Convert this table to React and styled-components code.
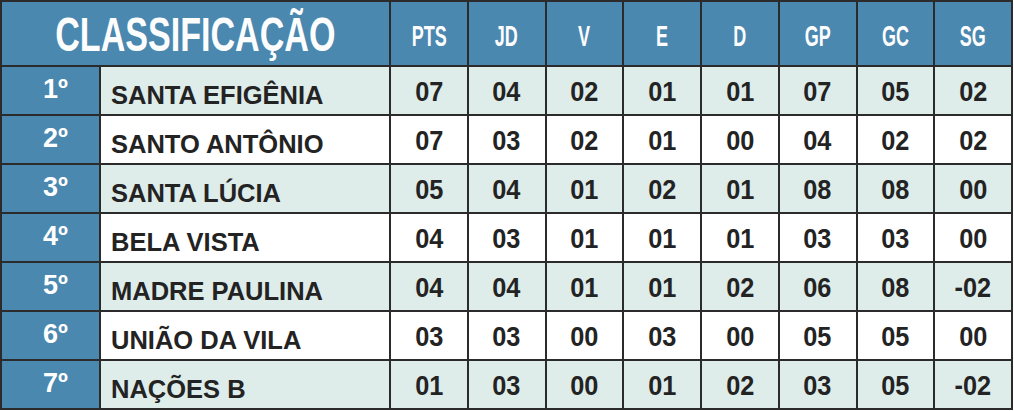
import React from 'react';
import styled, { createGlobalStyle } from 'styled-components';

const GlobalStyle = createGlobalStyle`
  html, body {
    margin: 0;
    padding: 0;
    background: #ffffff;
  }
  body {
    font-family: "Liberation Sans", Arial, sans-serif;
  }
`;

const standings = [
  { pos: '1º', team: 'SANTA EFIGÊNIA', stats: ['07', '04', '02', '01', '01', '07', '05', '02'] },
  { pos: '2º', team: 'SANTO ANTÔNIO', stats: ['07', '03', '02', '01', '00', '04', '02', '02'] },
  { pos: '3º', team: 'SANTA LÚCIA', stats: ['05', '04', '01', '02', '01', '08', '08', '00'] },
  { pos: '4º', team: 'BELA VISTA', stats: ['04', '03', '01', '01', '01', '03', '03', '00'] },
  { pos: '5º', team: 'MADRE PAULINA', stats: ['04', '04', '01', '01', '02', '06', '08', '-02'] },
  { pos: '6º', team: 'UNIÃO DA VILA', stats: ['03', '03', '00', '03', '00', '05', '05', '00'] },
  { pos: '7º', team: 'NAÇÕES B', stats: ['01', '03', '00', '01', '02', '03', '05', '-02'] },
];

const columns = ['PTS', 'JD', 'V', 'E', 'D', 'GP', 'GC', 'SG'];

const App = () => {
  return (
    <>
      <GlobalStyle />
      <Table>
        <TitleCell>
          <Condensed $scale={0.71}>CLASSIFICAÇÃO</Condensed>
        </TitleCell>
        {columns.map((col) => (
          <HeadCell key={col}>
            <Condensed $scale={0.6}>{col}</Condensed>
          </HeadCell>
        ))}
        {standings.map((row, i) => (
          <React.Fragment key={row.pos}>
            <PosCell>{row.pos}</PosCell>
            <NameCell $shaded={i % 2 === 0}>{row.team}</NameCell>
            {row.stats.map((val, j) => (
              <StatCell key={j} $shaded={i % 2 === 0}>
                <Condensed $scale={0.92}>{val}</Condensed>
              </StatCell>
            ))}
          </React.Fragment>
        ))}
      </Table>
    </>
  );
};

const Table = styled.div`
  display: grid;
  grid-template-columns: 97px 288px repeat(8, 1fr);
  grid-template-rows: 63px repeat(7, 47px);
  gap: 2px;
  width: 1013px;
  box-sizing: border-box;
  padding: 2px;
  background: #2b2b2b;
`;

const Condensed = styled.span`
  display: inline-block;
  transform: scaleX(${(p) => p.$scale});
  white-space: nowrap;
`;

const HeadCell = styled.div`
  display: flex;
  align-items: center;
  justify-content: center;
  background: #4a88b0;
  color: #fdfdfd;
  font-size: 30px;
  font-weight: 700;
  padding-top: 4px;
  box-sizing: border-box;
`;

const TitleCell = styled(HeadCell)`
  grid-column: span 2;
  font-size: 48px;
  padding-top: 2px;
`;

const PosCell = styled.div`
  display: flex;
  align-items: center;
  justify-content: center;
  background: #4a88b0;
  color: #ffffff;
  font-size: 27px;
  font-weight: 700;
  padding: 0 0 2px 10px;
  box-sizing: border-box;
`;

const NameCell = styled.div`
  display: flex;
  align-items: center;
  padding: 10px 0 0 10px;
  box-sizing: border-box;
  background: ${(p) => (p.$shaded ? '#deecea' : '#ffffff')};
  color: #232323;
  font-size: 25.5px;
  font-weight: 700;
  white-space: nowrap;
`;

const StatCell = styled.div`
  display: flex;
  align-items: center;
  justify-content: center;
  padding-top: 3px;
  box-sizing: border-box;
  background: ${(p) => (p.$shaded ? '#deecea' : '#ffffff')};
  color: #232323;
  font-size: 27.5px;
  font-weight: 700;
`;

export default App;
